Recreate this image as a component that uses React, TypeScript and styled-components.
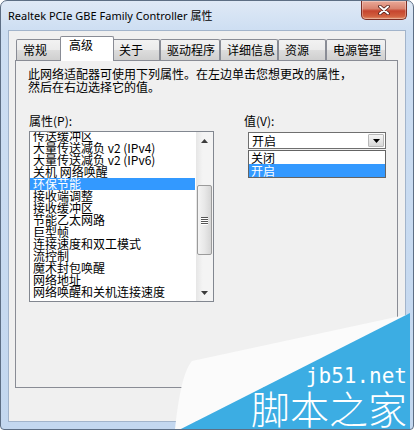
import React from 'react';
import styled, { createGlobalStyle } from 'styled-components';

const GlobalStyle = createGlobalStyle`
  html, body {
    margin: 0;
    padding: 0;
    background: #ffffff;
  }
  body {
    font-family: "Noto Sans CJK SC", "Noto Sans", sans-serif;
  }
`;

const tabs = [
  { label: '常规', w: 46 },
  { label: '高级', w: 50 },
  { label: '关于', w: 48 },
  { label: '驱动程序', w: 60 },
  { label: '详细信息', w: 58 },
  { label: '资源', w: 48 },
  { label: '电源管理', w: 60 },
];

const properties = [
  '传送缓冲区',
  '大量传送减负 v2 (IPv4)',
  '大量传送减负 v2 (IPv6)',
  '关机 网络唤醒',
  '环保节能',
  '接收端调整',
  '接收缓冲区',
  '节能乙太网路',
  '巨型帧',
  '连接速度和双工模式',
  '流控制',
  '魔术封包唤醒',
  '网络地址',
  '网络唤醒和关机连接速度',
];

const Window = styled.div`
  position: relative;
  width: 414px;
  height: 430px;
  box-sizing: border-box;
  display: flex;
  flex-direction: column;
  border: 1px solid #5d6e84;
  border-radius: 7px 7px 4px 4px;
  background: linear-gradient(180deg, #dfe9f6 0px, #cddef2 30px, #c3d7ef 100%);
  overflow: hidden;
`;

const TitleBar = styled.div`
  flex: none;
  height: 29px;
  display: flex;
  align-items: flex-start;
`;

const Title = styled.span`
  margin: 7px 0 0 7px;
  font-family: "Noto Sans", "Noto Sans CJK SC", sans-serif;
  font-size: 11px;
  line-height: 16px;
  color: #000;
  white-space: nowrap;
`;

const CloseButton = styled.div`
  margin-left: auto;
  margin-right: 6px;
  width: 46px;
  height: 19px;
  box-sizing: border-box;
  border: 1px solid #7b2e24;
  border-top: none;
  border-radius: 0 0 5px 5px;
  background: linear-gradient(180deg, #eaa998 0%, #d98470 42%, #c6452e 55%, #d1603f 85%, #e3946f 100%);
  box-shadow: inset 0 0 0 1px rgba(255, 255, 255, 0.3);
  display: flex;
  align-items: center;
  justify-content: center;
`;

const Client = styled.div`
  flex: 1;
  margin: 0 7px 7px 7px;
  border: 1px solid #a2b4cb;
  background: #f0f0f0;
  display: flex;
  flex-direction: column;
  padding: 0 7px 33px 6px;
`;

const TabStrip = styled.div`
  flex: none;
  height: 29px;
  display: flex;
  align-items: flex-end;
  padding-left: 1px;
`;

const Tab = styled.div<{ $active?: boolean; $w: number }>`
  position: relative;
  z-index: ${p => (p.$active ? 1 : 0)};
  box-sizing: border-box;
  width: ${p => p.$w + (p.$active ? 4 : 0)}px;
  height: ${p => (p.$active ? 25 : 21)}px;
  margin: 0 ${p => (p.$active ? -2 : 0)}px ${p => (p.$active ? -1 : 0)}px;
  padding: ${p => (p.$active ? '1px 0 0 8px' : '3px 0 0 6px')};
  border: 1px solid #898c95;
  border-bottom: none;
  border-radius: 2px 2px 0 0;
  background: ${p =>
    p.$active
      ? '#ffffff'
      : 'linear-gradient(180deg, #f2f2f2 0%, #ebebeb 50%, #dddddd 51%, #cfcfcf 100%)'};
  font-size: 12px;
  line-height: 14px;
  color: #000;
  white-space: nowrap;
`;

const Panel = styled.div`
  flex: 1;
  display: flex;
  flex-direction: column;
  border: 1px solid #898c95;
  background: #f0f0f0;
  padding: 6px 12px 0 12px;
`;

const Description = styled.p`
  margin: 0;
  font-size: 12px;
  line-height: 13px;
  color: #000;
`;

const FieldsRow = styled.div`
  display: flex;
  gap: 30px;
  margin: 21px 0 0 1px;
`;

const Column = styled.div<{ $width?: number }>`
  display: flex;
  flex-direction: column;
  width: ${p => (p.$width ? `${p.$width}px` : 'auto')};
`;

const FieldLabel = styled.div`
  font-size: 12px;
  line-height: 13px;
  color: #000;
  white-space: nowrap;
`;

const ListBox = styled.div`
  margin-top: 4px;
  width: 185px;
  height: 171px;
  box-sizing: border-box;
  border: 1px solid #828790;
  background: #ffffff;
  display: flex;
  overflow: hidden;
`;

const ListRows = styled.div`
  flex: 1;
  margin-top: -2px;
  padding-right: 1px;
  overflow: hidden;
`;

const ListRow = styled.div<{ $selected?: boolean }>`
  height: 12px;
  padding-left: 3px;
  font-size: 12px;
  line-height: 12px;
  white-space: nowrap;
  color: ${p => (p.$selected ? '#ffffff' : '#000000')};
  background: ${p => (p.$selected ? '#3399ff' : 'transparent')};
`;

const ScrollBar = styled.div`
  flex: none;
  width: 17px;
  display: flex;
  flex-direction: column;
  background: linear-gradient(90deg, #e6e6e6 0%, #f4f4f4 40%, #f4f4f4 100%);
`;

const ScrollArrow = styled.div`
  flex: none;
  height: 17px;
  display: flex;
  align-items: center;
  justify-content: center;
`;

const ScrollTrack = styled.div<{ $offset: number }>`
  flex: 1;
  padding-top: ${p => p.$offset}px;
`;

const ScrollThumb = styled.div<{ $height: number }>`
  box-sizing: border-box;
  height: ${p => p.$height}px;
  margin: 0 1px;
  border: 1px solid #9b9b9b;
  border-radius: 2px;
  background: linear-gradient(90deg, #f4f4f4 0%, #e8e8e8 50%, #d6d6d6 100%);
  display: flex;
  flex-direction: column;
  align-items: center;
  justify-content: center;
  gap: 1px;
`;

const Grip = styled.div`
  width: 7px;
  height: 1px;
  background: #555;
  box-shadow: 0 1px 0 #fff;
`;

const ComboWrap = styled.div`
  position: relative;
  margin: 5px 0 0 4px;
  width: 138px;
`;

const Combo = styled.div`
  box-sizing: border-box;
  height: 17px;
  border: 1px solid #6f6f6f;
  background: #ffffff;
  display: flex;
  align-items: center;
`;

const ComboText = styled.span`
  flex: 1;
  padding-left: 3px;
  font-size: 12px;
  line-height: 14px;
  color: #000;
`;

const ComboButton = styled.div`
  flex: none;
  box-sizing: border-box;
  width: 16px;
  height: 13px;
  margin-right: 1px;
  border: 1px solid #b8b8b8;
  border-radius: 1px;
  background: linear-gradient(180deg, #f6f6f6 0%, #e6e6e6 50%, #d8d8d8 100%);
  display: flex;
  align-items: center;
  justify-content: center;
`;

const DropList = styled.div`
  position: absolute;
  left: 0;
  right: 0;
  top: calc(100% + 1px);
  box-sizing: border-box;
  border: 1px solid #646464;
  background: #ffffff;
`;

const DropItem = styled.div<{ $selected?: boolean }>`
  height: 13px;
  padding-left: 2px;
  font-size: 12px;
  line-height: 13px;
  color: ${p => (p.$selected ? '#ffffff' : '#000000')};
  background: ${p => (p.$selected ? '#3399ff' : 'transparent')};
`;

const Watermark = styled.div`
  position: absolute;
  right: 0;
  bottom: 0;
  width: 244px;
  height: 130px;
  pointer-events: none;
`;

const WatermarkArt = styled.svg`
  position: absolute;
  left: 0;
  top: 0;
`;

const WatermarkText = styled.div`
  position: relative;
  display: flex;
  flex-direction: column;
  align-items: flex-end;
  padding: 66px 6px 0 0;
  color: #ffffff;
`;

const SiteName = styled.span`
  font-family: "DejaVu Sans Mono", "Liberation Mono", monospace;
  font-size: 21px;
  line-height: 22px;
`;

const SiteTitle = styled.span`
  font-family: "Noto Sans CJK SC", sans-serif;
  font-size: 39px;
  line-height: 40px;
  font-weight: 300;
`;

function Triangle({ up }: { up?: boolean }) {
  return (
    <svg width="7" height="4" viewBox="0 0 7 4">
      <path d={up ? 'M0 4 L3.5 0 L7 4 Z' : 'M0 0 L7 0 L3.5 4 Z'} fill="#3c3c3c" />
    </svg>
  );
}

export default function App() {
  const selectedTab = 1;
  const selectedRow = 4;

  return (
    <>
      <GlobalStyle />
      <Window>
        <TitleBar>
          <Title>Realtek PCIe GBE Family Controller 属性</Title>
          <CloseButton>
            <svg width="12" height="10" viewBox="0 0 12 10">
              <path d="M2 1.5 L10 8.5 M10 1.5 L2 8.5" stroke="#4a1a14" strokeWidth="3.6" strokeLinecap="round" />
              <path d="M2 1.5 L10 8.5 M10 1.5 L2 8.5" stroke="#ffffff" strokeWidth="2" strokeLinecap="round" />
            </svg>
          </CloseButton>
        </TitleBar>

        <Client>
          <TabStrip>
            {tabs.map((t, i) => (
              <Tab key={t.label} $w={t.w} $active={i === selectedTab}>
                {t.label}
              </Tab>
            ))}
          </TabStrip>

          <Panel>
            <Description>
              此网络适配器可使用下列属性。在左边单击您想更改的属性，
              <br />
              然后在右边选择它的值。
            </Description>

            <FieldsRow>
              <Column $width={185}>
                <FieldLabel>属性(P):</FieldLabel>
                <ListBox>
                  <ListRows>
                    {properties.map((name, i) => (
                      <ListRow key={name} $selected={i === selectedRow}>
                        {name}
                      </ListRow>
                    ))}
                  </ListRows>
                  <ScrollBar>
                    <ScrollArrow>
                      <Triangle up />
                    </ScrollArrow>
                    <ScrollTrack $offset={36}>
                      <ScrollThumb $height={70}>
                        <Grip />
                        <Grip />
                        <Grip />
                        <Grip />
                      </ScrollThumb>
                    </ScrollTrack>
                    <ScrollArrow>
                      <Triangle />
                    </ScrollArrow>
                  </ScrollBar>
                </ListBox>
              </Column>

              <Column>
                <FieldLabel>值(V):</FieldLabel>
                <ComboWrap>
                  <Combo>
                    <ComboText>开启</ComboText>
                    <ComboButton>
                      <svg width="7" height="4" viewBox="0 0 7 4">
                        <path d="M0 0 L7 0 L3.5 4 Z" fill="#000" />
                      </svg>
                    </ComboButton>
                  </Combo>
                  <DropList>
                    <DropItem>关闭</DropItem>
                    <DropItem $selected>开启</DropItem>
                  </DropList>
                </ComboWrap>
              </Column>
            </FieldsRow>
          </Panel>
        </Client>

        <Watermark>
          <WatermarkArt width="244" height="130" viewBox="0 0 244 130">
            <path d="M23 62 L241 15 L12 130 L6 130 C9 104 13 74 23 62 Z" fill="#fbfbfb" />
            <path d="M12 130 L241 14 L241 130 Z" fill="#3cade3" />
          </WatermarkArt>
          <WatermarkText>
            <SiteName>jb51.net</SiteName>
            <SiteTitle>脚本之家</SiteTitle>
          </WatermarkText>
        </Watermark>
      </Window>
    </>
  );
}
